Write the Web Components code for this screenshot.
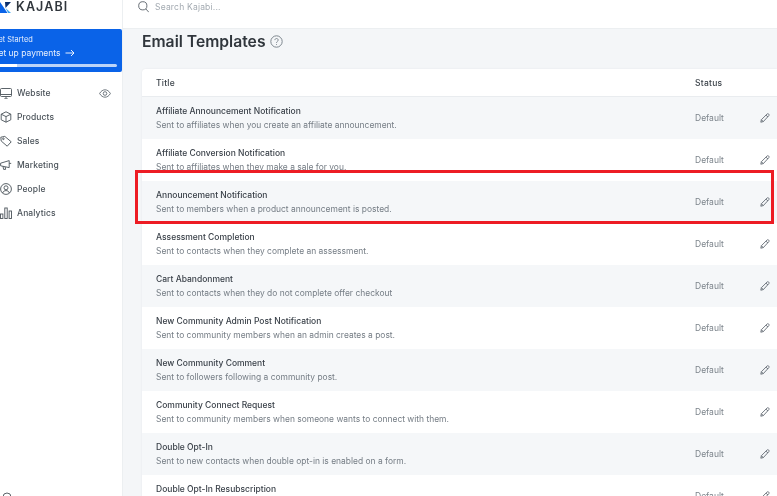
<!DOCTYPE html>
<html>
<head>
<meta charset="utf-8">
<title>Email Templates</title>
<style>
  html, body { margin: 0; height: 100%; overflow: hidden; }
  body { font-family: Inter, "Liberation Sans", sans-serif; background: #f4f6f8; }
</style>
</head>
<body>
<kj-app>
  <kj-sidebar slot="sidebar"></kj-sidebar>
  <kj-topbar slot="topbar"></kj-topbar>
  <kj-table>
    <kj-row title="Affiliate Announcement Notification" desc="Sent to affiliates when you create an affiliate announcement."></kj-row>
    <kj-row title="Affiliate Conversion Notification" desc="Sent to affiliates when they make a sale for you."></kj-row>
    <kj-row title="Announcement Notification" desc="Sent to members when a product announcement is posted."></kj-row>
    <kj-row title="Assessment Completion" desc="Sent to contacts when they complete an assessment."></kj-row>
    <kj-row title="Cart Abandonment" desc="Sent to contacts when they do not complete offer checkout"></kj-row>
    <kj-row title="New Community Admin Post Notification" desc="Sent to community members when an admin creates a post."></kj-row>
    <kj-row title="New Community Comment" desc="Sent to followers following a community post."></kj-row>
    <kj-row title="Community Connect Request" desc="Sent to community members when someone wants to connect with them."></kj-row>
    <kj-row title="Double Opt-In" desc="Sent to new contacts when double opt-in is enabled on a form."></kj-row>
    <kj-row title="Double Opt-In Resubscription" desc="Sent to contacts when they resubscribe."></kj-row>
  </kj-table>
</kj-app>

<script>
const icons = {
  website: '<rect x="0.5" y="1.5" width="11" height="8" rx="1"/><path d="M0.5 7.500h11M4 12h4M6 9.500V12"/>',
  products: '<path d="M6 0.800l4.800 2.400v5.600L6 11.200 1.200 8.800V3.200zM1.200 3.200L6 5.600l4.800-2.400M6 5.600v5.600"/>',
  sales: '<path d="M0.800 2.200l4-.8 6.400 5.400-4 4.400L1.200 6z"/><circle cx="3.400" cy="3.800" r=".8"/>',
  marketing: '<path d="M0.600 4.200l8.600-2.600v7L0.600 6.800zM9.200 4.400h2M3 7.400l.6 3h2l-.4-2.400"/>',
  people: '<circle cx="6" cy="6" r="5.400"/><circle cx="6" cy="4.800" r="2"/><path d="M2.600 10c.6-1.800 2-2.400 3.400-2.400s2.800.6 3.400 2.400"/>',
  analytics: '<rect x="0.500" y="7" width="2.400" height="4.500"/><rect x="4.800" y="1" width="2.400" height="10.500"/><rect x="9.100" y="4" width="2.400" height="7.500"/>'
};

class KjApp extends HTMLElement {
  constructor() {
    super();
    this.attachShadow({ mode: 'open' }).innerHTML = `
      <style>
        :host { display: grid; grid-template-columns: 123px 1fr; width: 777px; height: 496px; overflow: hidden; position: relative; filter: blur(.35px); }
        .main { display: flex; flex-direction: column; min-width: 0; }
        h1 { margin: 0; font-size: 15.700px; line-height: 20px; font-weight: 600; color: #30363c; display: flex; align-items: center; gap: 4px; }
        .content { padding: 3px 0 0 19px; }
        .content svg { display: block; margin-top: -1px; }
        .slot-table { margin-top: 17px; }
        /* red annotation box drawn over the third row */
        .mark { position: absolute; left: 135px; top: 170px; width: 633px; height: 48px; border: 3px solid #ed1c24; pointer-events: none; }
      </style>
      <slot name="sidebar"></slot>
      <div class="main">
        <slot name="topbar"></slot>
        <div class="content">
          <h1>Email Templates
            <svg width="13" height="13" viewBox="0 0 13 13" fill="none" stroke="#7d868e" stroke-width="1">
              <circle cx="6.500" cy="6.500" r="5.700"/>
              <path d="M4.900 5.100c0-2.100 3.300-2.100 3.300 0 0 1.300-1.700 1.300-1.700 2.700M6.500 9.200v.8"/>
            </svg>
          </h1>
          <div class="slot-table"><slot></slot></div>
        </div>
      </div>
      <div class="mark"></div>`;
  }
}

class KjSidebar extends HTMLElement {
  constructor() {
    super();
    const items = [['website', 'Website'], ['products', 'Products'], ['sales', 'Sales'], ['marketing', 'Marketing'], ['people', 'People'], ['analytics', 'Analytics']];
    const nav = items.map(([key, label]) => `
      <div class="item">
        <svg width="12" height="12" viewBox="0 0 12 12" fill="none" stroke="#4a5259" stroke-width=".9">${icons[key]}</svg>
        <span>${label}</span>
        ${key === 'website' ? `<svg class="eye" width="12" height="9" viewBox="0 0 12 9" fill="none" stroke="#626b73" stroke-width=".9"><path d="M.6 4.500C2 2 4 .8 6 .8s4 1.200 5.400 3.700C10 7 8 8.200 6 8.200S2 7 .6 4.500z"/><circle cx="6" cy="4.500" r="1.800"/></svg>` : ''}
      </div>`).join('');
    this.attachShadow({ mode: 'open' }).innerHTML = `
      <style>
        :host { display: flex; flex-direction: column; height: 496px; background: #fff; border-right: 1px solid #eceff1; box-sizing: content-box; width: 122px; overflow: hidden; color: #4a5259; position: relative; }
        .logo { display: flex; align-items: center; gap: 5px; flex: none; margin-top: -14px; height: 42px; }
        .logo b { font-size: 12.500px; font-weight: 600; letter-spacing: 1.100px; color: #30363c; line-height: 14px; }
        .promo { background: #0a63e8; color: #e8f0fd; height: 43px; box-sizing: border-box; margin-top: 1px; border-radius: 0 2px 2px 0; padding: 6px 5px 0 0; font-size: 7.400px; line-height: 10px; }
        .promo div { margin-left: -7px; white-space: nowrap; }
        .promo .cta { font-size: 8.500px; line-height: 14px; margin-top: 1px; display: flex; align-items: center; gap: 4px; }
        .bar { height: 3px; background: #bcd4f8; border-radius: 2px; margin-top: 4px; }
        .bar i { display: block; width: 24px; height: 3px; background: #fff; }
        nav { display: flex; flex-direction: column; margin-top: 9px; }
        .item { display: flex; align-items: center; gap: 5px; height: 24px; font-size: 8.500px; font-weight: 500; letter-spacing: .1px; }
        .item svg { flex: none; }
        .item .eye { margin-left: auto; margin-right: 11px; }
        .foot { position: absolute; left: 2px; bottom: -6px; }
      </style>
      <div class="logo">
        <svg width="11" height="12" viewBox="0 0 11 12"><path d="M5 1h6L5.500 7z" fill="#0b2f6e"/><path d="M0 1l7.500 11H0z" fill="#0a63e8"/><path d="M5.500 7L11 12H8.200z" fill="#37a3f0"/></svg>
        <b>KAJABI</b>
      </div>
      <div class="promo">
        <div>Get Started</div>
        <div class="cta">Set up payments
          <svg width="10" height="8" viewBox="0 0 10 8" fill="none" stroke="#fff" stroke-width=".9"><path d="M.5 4h8.500M6 1l3 3-3 3"/></svg>
        </div>
        <div class="bar"><i></i></div>
      </div>
      <nav>${nav}</nav>
      <svg class="foot" width="10" height="10" viewBox="0 0 10 10" fill="none" stroke="#4a5259" stroke-width=".9"><circle cx="5" cy="5" r="4"/></svg>`;
  }
}

class KjTopbar extends HTMLElement {
  constructor() {
    super();
    this.attachShadow({ mode: 'open' }).innerHTML = `
      <style>
        :host { display: flex; align-items: center; gap: 6px; height: 29px; box-sizing: border-box; background: #fff; border-bottom: 1px solid #eceff1; padding: 0 0 14px 15px; }
        span { font-size: 8.500px; color: #a3aab1; letter-spacing: .2px; }
      </style>
      <svg width="11" height="12" viewBox="0 0 11 12" fill="none" stroke="#596169" stroke-width=".9"><circle cx="4.800" cy="4.800" r="4.100"/><path d="M7.800 7.900l3 3.300"/></svg>
      <span>Search Kajabi...</span>`;
  }
}

class KjTable extends HTMLElement {
  constructor() {
    super();
    this.attachShadow({ mode: 'open' }).innerHTML = `
      <style>
        :host { display: block; background: #fff; border-radius: 4px 0 0 0; box-shadow: 0 0 2px rgba(30,40,50,.08); width: 635px; }
        .head { display: grid; grid-template-columns: 1fr 82px; align-items: center; height: 28px; box-sizing: border-box; padding-left: 14px; border-bottom: 1px solid #e9ecef; font-size: 8.500px; font-weight: 500; color: #3c434a; letter-spacing: .25px; }
        ::slotted(kj-row:nth-child(odd)) { background: #f5f7f9; }
      </style>
      <div class="head"><span>Title</span><span>Status</span></div>
      <slot></slot>`;
  }
}

class KjRow extends HTMLElement {
  connectedCallback() {
    if (this.shadowRoot) return;
    this.attachShadow({ mode: 'open' }).innerHTML = `
      <style>
        :host { display: grid; grid-template-columns: 1fr 65px 17px; align-items: center; height: 42px; box-sizing: border-box; padding-left: 14px; }
        .title { font-size: 8.500px; line-height: 14px; font-weight: 500; color: #3a4149; }
        .desc { font-size: 8.450px; line-height: 14px; color: #757d85; white-space: nowrap; }
        .status { font-size: 8.500px; color: #7d858c; }
        svg { display: block; }
      </style>
      <div>
        <div class="title">${this.getAttribute('title')}</div>
        <div class="desc">${this.getAttribute('desc')}</div>
      </div>
      <div class="status">Default</div>
      <svg width="10" height="10" viewBox="0 0 10 10" fill="none" stroke="#59616a" stroke-width=".85"><path d="M.8 9.200l.6-2.500L7 1.100c.5-.5 1.200-.5 1.700 0s.5 1.200 0 1.700L3.300 8.600zM6 2.100l1.900 1.900M1.400 6.700l1.900 1.900"/></svg>`;
    this.removeAttribute('title');
  }
}

customElements.define('kj-app', KjApp);
customElements.define('kj-sidebar', KjSidebar);
customElements.define('kj-topbar', KjTopbar);
customElements.define('kj-table', KjTable);
customElements.define('kj-row', KjRow);
</script>
</body>
</html>
